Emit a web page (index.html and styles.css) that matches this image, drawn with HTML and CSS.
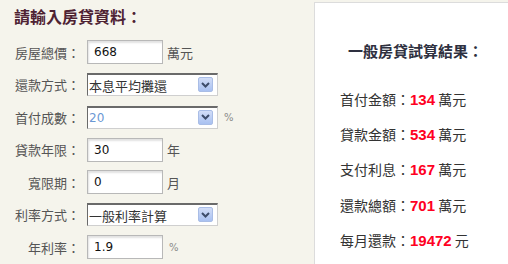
FILE: index.html
```html
<!DOCTYPE html>
<html lang="zh-Hant">

<head>
  <meta charset="UTF-8" />
  <title>房貸試算</title>
  <link rel="stylesheet" href="styles.css">
</head>

<body>
  <div class="page">
    <div class="form-side">
      <h2 class="form-title">請輸入房貸資料：</h2>
      <div class="form-grid">
        <label>房屋總價：</label>
        <div class="field"><input type="text" class="txt" value="668"><span class="unit">萬元</span></div>

        <label>還款方式：</label>
        <div class="field">
          <div class="sel">
            <span class="sel-text">本息平均攤還</span>
            <span class="sel-btn"><svg width="9" height="6" viewBox="0 0 9 6"><path d="M1 1 L4.5 4.5 L8 1" fill="none" stroke="#3d4c6a" stroke-width="2"/></svg></span>
          </div>
        </div>

        <label>首付成數：</label>
        <div class="field">
          <div class="sel">
            <span class="sel-text blue">20</span>
            <span class="sel-btn"><svg width="9" height="6" viewBox="0 0 9 6"><path d="M1 1 L4.5 4.5 L8 1" fill="none" stroke="#3d4c6a" stroke-width="2"/></svg></span>
          </div>
          <span class="unit pct">%</span>
        </div>

        <label>貸款年限：</label>
        <div class="field"><input type="text" class="txt" value="30"><span class="unit">年</span></div>

        <label>寬限期：</label>
        <div class="field"><input type="text" class="txt" value="0"><span class="unit">月</span></div>

        <label>利率方式：</label>
        <div class="field">
          <div class="sel">
            <span class="sel-text">一般利率計算</span>
            <span class="sel-btn"><svg width="9" height="6" viewBox="0 0 9 6"><path d="M1 1 L4.5 4.5 L8 1" fill="none" stroke="#3d4c6a" stroke-width="2"/></svg></span>
          </div>
        </div>

        <label>年利率：</label>
        <div class="field"><input type="text" class="txt" value="1.9"><span class="unit pct">%</span></div>
      </div>
    </div>

    <div class="result-side">
      <h3 class="result-title">一般房貸試算結果：</h3>
      <ul class="results">
        <li>首付金額：<b>134</b> 萬元</li>
        <li>貸款金額：<b>534</b> 萬元</li>
        <li>支付利息：<b>167</b> 萬元</li>
        <li>還款總額：<b>701</b> 萬元</li>
        <li>每月還款：<b>19472</b> 元</li>
      </ul>
    </div>
  </div>
</body>

</html>
```

FILE: styles.css
```css
* {
  box-sizing: border-box;
}

body {
  margin: 0;
  background: #f5f4ec;
  font-family: "Noto Sans CJK TC", sans-serif;
  overflow: hidden;
}

.page {
  display: flex;
  width: 508px;
  height: 264px;
}

.form-side {
  width: 314px;
  flex-shrink: 0;
  padding: 6px 0 0 14px;
}

.form-title {
  margin: 0 0 10px;
  font-size: 16px;
  line-height: 20px;
  font-weight: bold;
  color: #4e2233;
}

.form-grid {
  display: grid;
  grid-template-columns: 66px 1fr;
  grid-auto-rows: 32.5px;
  column-gap: 7px;
}

.form-grid label {
  text-align: right;
  font-size: 13px;
  color: #555;
  align-self: center;
}

.field {
  display: flex;
  align-items: center;
}

.txt {
  width: 76px;
  height: 24px;
  margin: 0;
  padding: 0 6px;
  border: 1px solid #b8b8b8;
  box-shadow: inset 1px 2px 2px #e2e2e2;
  background: #fff;
  font-family: "DejaVu Sans", sans-serif;
  font-size: 12px;
  color: #111;
}

.unit {
  margin-left: 4px;
  font-size: 13px;
  color: #555;
}

.unit.pct {
  margin-left: 6px;
  font-family: "DejaVu Sans", sans-serif;
  font-size: 10px;
  color: #8a8a8a;
}

.sel {
  position: relative;
  width: 131px;
  height: 23px;
  background: #fff;
  border-top: 2px solid #6a6a6a;
  border-left: 1px solid #6a6a6a;
  border-right: 1px solid #cfcfcf;
  border-bottom: 1px solid #cfcfcf;
  display: flex;
  align-items: center;
}

.sel-text {
  padding-left: 1px;
  font-size: 13px;
  color: #333;
}

.sel-text.blue {
  font-family: "DejaVu Sans", sans-serif;
  font-size: 12px;
  color: #6b98d4;
}

.sel-btn {
  position: absolute;
  right: 4px;
  top: 2px;
  width: 15px;
  height: 15px;
  border: 1px solid #a9bde6;
  border-radius: 2px;
  background: linear-gradient(#d2ddf7, #a9c1f1);
  display: flex;
  align-items: center;
  justify-content: center;
}

.result-side {
  flex: 1;
  margin-top: 2px;
  background: #fff;
  border: 1px solid #dcdcdc;
  border-right: none;
  border-bottom: none;
  padding: 0 0 0 25px;
  color: #333;
}

.result-title {
  margin: 38px 0 0 8px;
  font-size: 15px;
  line-height: 20px;
  font-weight: bold;
  color: #2e3040;
}

.results {
  list-style: none;
  margin: 28px 0 0;
  padding: 0;
}

.results li {
  font-size: 14px;
  line-height: 20px;
  margin-bottom: 14.2px;
}

.results b {
  font-family: "Liberation Sans", sans-serif;
  font-size: 15px;
  color: #ff0022;
}
```
